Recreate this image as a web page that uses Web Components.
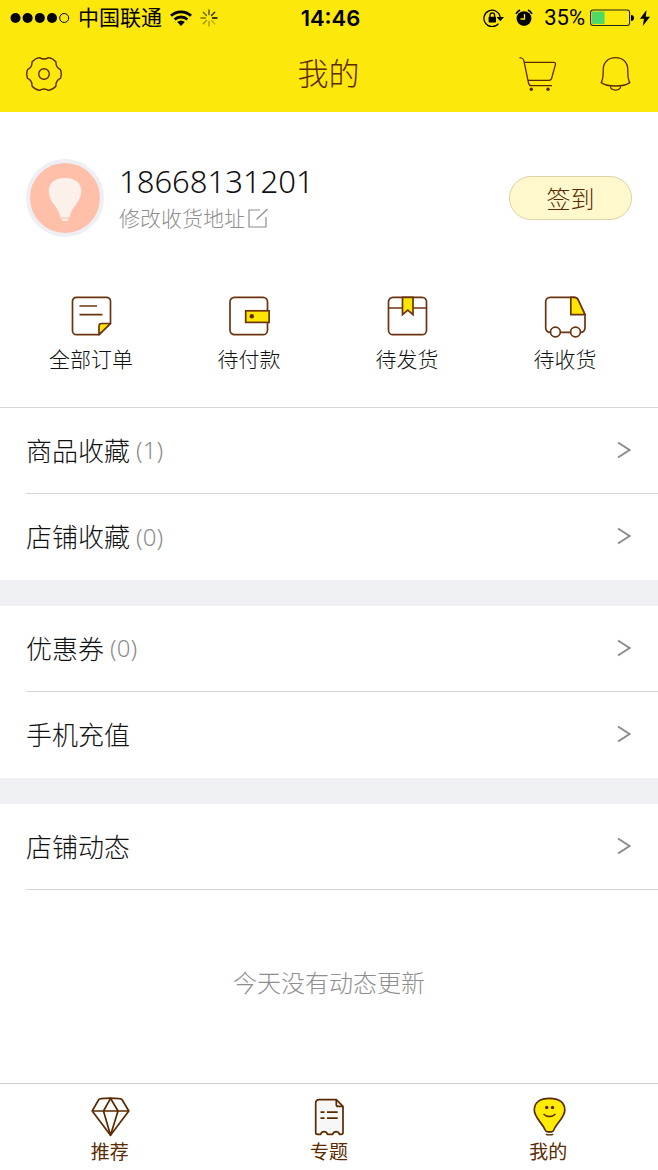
<!DOCTYPE html>
<html lang="zh-CN">
<head>
<meta charset="utf-8">
<meta name="viewport" content="width=device-width, initial-scale=1">
<title>我的</title>
<style>
  html, body { margin: 0; }
  body {
    --brand: #fde80c;
    --brown: #5a2a00;
    --line: #d6d6d8;
    --gap: #eff0f4;
    --muted: #8e8e8e;
    font-family: "Noto Sans", "Noto Sans CJK SC", sans-serif;
    font-weight: 300;
    color: #111;
    background: #fff;
  }
</style>
</head>
<body>
<account-page></account-page>

<script>
const ICONS = {
  signal: [60, 12, '<g fill="#000"><circle cx="5.5" cy="6" r="5"/><circle cx="17.6" cy="6" r="5"/><circle cx="29.8" cy="6" r="5"/><circle cx="42" cy="6" r="5"/></g><circle cx="54.2" cy="6" r="4.5" fill="none" stroke="#000"/>'],
  wifi: [22, 16, '<g fill="none" stroke="#000" stroke-width="2.8"><path d="M1 5.8a14.5 14.5 0 0 1 20 0"/><path d="M4.6 9.6a9.2 9.2 0 0 1 12.8 0"/></g><path d="M7.2 12a5.4 5.4 0 0 1 7.6 0L11 16z" fill="#000"/>'],
  spinner: [18, 18, '<g stroke="#000" stroke-width="1.3" stroke-linecap="round"><path d="M9 1v4.5" opacity=".7"/><path d="M14.7 3.3l-3.2 3.2" opacity=".85"/><path d="M12.5 9H17"/><path d="M14.7 14.7l-3.2-3.2" opacity=".25"/><path d="M9 12.5V17" opacity=".35"/><path d="M3.3 14.7l3.2-3.2" opacity=".4"/><path d="M1 9h4.5" opacity=".5"/><path d="M3.3 3.3l3.2 3.2" opacity=".6"/></g>'],
  lock: [21, 18, '<path d="M15.5 14.6A8.2 8.2 0 1 1 17.2 8" fill="none" stroke="#000" stroke-width="1.3"/><path d="M13.6 8H21l-3.7 4.2z" fill="#000"/><rect x="5.6" y="7.8" width="7.4" height="5.6" rx=".7" fill="#000"/><path d="M7 8V6.2a2.3 2.3 0 0 1 4.6 0V8" fill="none" stroke="#000" stroke-width="1.3"/>'],
  alarm: [18, 18, '<circle cx="9" cy="9.6" r="7.4" fill="#000"/><path d="M1 5a9 9 0 0 1 4-4M17 5a9 9 0 0 0-4-4" fill="none" stroke="#000" stroke-width="1.6"/><path d="M9.5 5v5H5.5" fill="none" stroke="#fde80c" stroke-width="1.3"/>'],
  battery: [44, 18, '<rect x=".6" y="1" width="39" height="15.5" rx="2.5" fill="none" stroke="#222" stroke-width="1.1"/><rect x="2" y="2.6" width="12.5" height="12.3" fill="#4cd964"/><path d="M41 6a3 3 0 0 1 0 6z" fill="#000"/>'],
  bolt: [12, 16, '<path d="M7.5 0L1 8.8h4L3.8 16 11 6.8H6.8z" fill="#000"/>'],
  gear: [36, 36, '<g fill="none" stroke="#5a2a00" stroke-width="1.4" stroke-linejoin="round"><path d="M22.4 1.6A12 12 0 0 1 30 6Q29.6 11.3 34.4 13.6A12 12 0 0 1 34.4 22.4Q29.6 24.7 30 30A12 12 0 0 1 22.4 34.4Q18 31.5 13.6 34.4A12 12 0 0 1 6 30Q6.4 24.7 1.6 22.4A12 12 0 0 1 1.6 13.6Q6.4 11.3 6 6A12 12 0 0 1 13.6 1.6Q18 4.5 22.4 1.6z"/><circle cx="18" cy="18" r="5.3"/></g>'],
  cart: [38, 36, '<g fill="none" stroke="#5a2a00" stroke-width="1.3" stroke-linejoin="round"><path d="M.5 1.6C3.6 1.8 4.7 2.6 5.2 6.2L9.4 26.5Q10 29.6 12 29.6H33"/><path d="M5.2 6.3H34.5Q36.9 6.3 36.4 8.6L32.6 22.5Q32 24.4 30 24.4H9"/></g><circle cx="12.3" cy="33.3" r="1.7" fill="#5a2a00"/><circle cx="29" cy="33.3" r="1.7" fill="#5a2a00"/>'],
  bell: [32, 36, '<g fill="none" stroke="#5a2a00" stroke-width="1.3" stroke-linejoin="round"><path d="M2.2 26.6C4.4 23 4.2 19.5 4.2 14 4.2 6.5 9 1.6 16.5 1.6S28.8 6.5 28.8 14c0 5.500-.2 9 2 12.600C28 28.6 22.5 30 16.5 30S5 28.6 2.2 26.6z"/><path d="M11.3 30.3c.5 5 9.9 5 10.4 0"/></g>'],
  avatar: [78, 78, '<circle cx="39" cy="39" r="37" fill="#ffbfa9" stroke="#eeeff4" stroke-width="4"/><path d="M39 19c-9.5 0-16.3 4.5-16.3 13.2C22.7 43 32.5 47 34.4 58.5h9.2C45.5 47 55.3 43 55.3 32.2 55.3 23.5 48.5 19 39 19z" fill="#fbf1ea"/><path d="M35.5 59.5h7l-.8 2.400h-5.400z" fill="#fbf1ea"/>'],
  edit: [22, 22, '<path d="M13 3H2v17h17V10M9.5 12.5L20.5 2" fill="none" stroke="#8e8e8e" stroke-width="1.2"/>'],
  order: [44, 44, '<g fill="none" stroke="#6b3410" stroke-width="1.7" stroke-linejoin="round"><path d="M30 40.7H7.5a4 4 0 0 1-4-4V7.3a4 4 0 0 1 4-4h30a4 4 0 0 1 4 4V29.5z"/><path d="M30 40.7V32a2.5 2.5 0 0 1 2.5-2.5h9z" fill="#ffe600"/><path d="M10.5 12H28M10.5 20.6H33.5"/></g>'],
  wallet: [44, 44, '<g fill="none" stroke="#6b3410" stroke-width="1.7"><rect x="3" y="3.3" width="37.5" height="37.4" rx="4.5"/><rect x="18.7" y="16.8" width="23.4" height="11.6" fill="#ffe600"/></g><circle cx="24.8" cy="22.3" r="2.2" fill="#5a2a00"/>'],
  box: [44, 44, '<g fill="none" stroke="#6b3410" stroke-width="1.7"><rect x="3.5" y="3.3" width="38" height="37.4" rx="4.5"/><path d="M3.5 14H41.5"/><path d="M17.5 3.3H28V20.6L22.8 16.2 17.5 20.6z" fill="#ffe600"/></g>'],
  truck: [44, 44, '<g fill="none" stroke="#6b3410" stroke-width="1.7" stroke-linejoin="round"><path d="M12 38.3H7a4.3 4.3 0 0 1-4.3-4.3V7.6A4.3 4.3 0 0 1 7 3.3H31Q34 3.3 35.2 6L42 20.7V34a4.3 4.3 0 0 1-4.3 4.3z"/><path d="M27.8 3.3H31Q34 3.3 35.2 6L42 20.7H27.8z" fill="#ffe600"/><circle cx="12.4" cy="38" r="4.9" fill="#fff"/><circle cx="32.5" cy="38" r="4.9" fill="#fff"/></g>'],
  chevron: [14, 18, '<path d="M1 1.5L12.5 9 1 16.5" fill="none" stroke="#8c8c8c" stroke-width="2"/>'],
  diamond: [40, 40, '<g fill="none" stroke="#5a2a00" stroke-width="1.7" stroke-linejoin="round"><path d="M8.5 3Q9.3 1.7 11 1.6 20 .8 29.5 1.6 31.5 1.7 32.3 3L38.8 14 20.5 38.3 2.2 14z"/><path d="M2.2 14H38.8M20.5 1.3L13.5 14 20.5 38.3 28 14z"/></g>'],
  topic: [40, 40, '<path d="M10 2.7H27.3L34 9.4V35.5Q34 37.3 32 37.3H30.6C29 33.8 25.2 33.8 23.6 37.3H18.6C17 33.8 13.2 33.8 11.6 37.3H8.5Q6.7 37.3 6.7 35.5V6Q6.7 2.7 10 2.7z" fill="#f7f7f7" stroke="#5a2a00" stroke-width="1.7" stroke-linejoin="round"/><path d="M27.3 2.7V7.4Q27.3 9.4 29.3 9.4H34M11.5 15.2H15.5M18 15.2H28.7M11.5 21.2H15.5M18 21.2H28.7" fill="none" stroke="#5a2a00" stroke-width="1.7"/>'],
  bulb: [40, 40, '<g stroke="#5a2a00" stroke-width="1.7" stroke-linejoin="round" fill="none"><path d="M21.5 1.3C12 1.3 6.3 5.5 6.3 13 6.3 20.5 14 25.5 17.2 33 17.7 34.3 18.4 34.8 19.6 34.8H23.4C24.6 34.8 25.3 34.3 25.8 33 29 25.5 36.8 20.5 36.8 13 36.8 5.5 31 1.3 21.5 1.3z" fill="#ffec00"/><path d="M15.5 17c3 3.3 9 3.3 12 0M17.8 37.4q3.7 1 7.5 0" stroke-width="1.4"/></g><circle cx="18.7" cy="10.5" r="1.7" fill="#5a2a00"/><circle cx="24.5" cy="10.5" r="1.7" fill="#5a2a00"/>']
};

const define = (name, markup, init) => {
  const template = document.createElement('template');
  template.innerHTML = markup;
  customElements.define(name, class extends HTMLElement {
    constructor() {
      super();
      this.attachShadow({ mode: 'open' }).append(template.content.cloneNode(true));
    }
    connectedCallback() { if (init) init(this, this.shadowRoot); }
  });
};

define('app-icon', `<style>:host{display:block;flex:none} svg{display:block}</style><svg aria-hidden="true"></svg>`, (el, root) => {
  const [w, h, body] = ICONS[el.getAttribute('name')];
  const svg = root.querySelector('svg');
  svg.setAttribute('width', w);
  svg.setAttribute('height', h);
  svg.setAttribute('viewBox', `0 0 ${w} ${h}`);
  svg.innerHTML = body;
});

define('status-bar', `
<style>
  :host { display: grid; grid-template-columns: 1fr auto 1fr; align-items: center; height: 36px; padding: 0 7px 0 10px; background: var(--brand); color: #000; font: 400 21px/36px "Inter", "Noto Sans CJK SC", sans-serif; }
  div { display: flex; align-items: center; }
  .left { gap: 8px; }
  .right { justify-content: flex-end; gap: 5px; }
  .lock, .alarm { margin-right: 6px; }
  .charge { font-family: Roboto, sans-serif; font-size: 22px; }
  time { font-weight: 600; font-size: 22px; }
</style>
<div class="left"><app-icon name="signal"></app-icon><span>中国联通</span><app-icon name="wifi"></app-icon><app-icon name="spinner"></app-icon></div>
<time>14:46</time>
<div class="right"><app-icon class="lock" name="lock"></app-icon><app-icon class="alarm" name="alarm"></app-icon><span class="charge">35%</span><app-icon name="battery"></app-icon><app-icon name="bolt"></app-icon></div>`);

define('nav-bar', `
<style>
  :host { display: grid; grid-template-columns: 1fr auto 1fr; align-items: center; height: 76px; padding: 0 27px 0 26px; background: var(--brand); color: var(--brown); }
  h1 { margin: 0; padding-bottom: 3px; font-size: 31px; font-weight: 300; line-height: 40px; }
  button { border: 0; padding: 0; background: none; }
  div { display: flex; }
  .end { justify-content: flex-end; gap: 42px; }
</style>
<div><button aria-label="设置"><app-icon name="gear"></app-icon></button></div>
<h1><slot></slot></h1>
<div class="end"><button aria-label="购物车"><app-icon name="cart"></app-icon></button><button aria-label="消息"><app-icon name="bell"></app-icon></button></div>`);

define('user-profile', `
<style>
  :host { display: flex; align-items: center; gap: 15px; padding: 47px 26px 0; }
  .who { flex: 1; padding-top: 2px; }
  .phone { font-size: 31px; line-height: 38px; }
  a { display: flex; align-items: center; gap: 2px; font-size: 21px; line-height: 36px; color: var(--muted); text-decoration: none; }
  button { width: 123px; height: 44px; padding: 0 0 2px; border: 1px solid #ddd2a6; border-radius: 22px; background: #fff8cc; color: var(--brown); font: inherit; font-size: 24px; }
</style>
<app-icon name="avatar"></app-icon>
<div class="who"><div class="phone"><slot></slot></div><a href="#address"><span>修改收货地址</span><app-icon name="edit"></app-icon></a></div>
<button>签到</button>`);

define('icon-link', `
<style>
  :host { display: block; flex: 1; }
  a { display: flex; flex-direction: column; align-items: center; gap: var(--icon-gap); color: inherit; text-decoration: none; font-size: var(--label-size); line-height: var(--label-line); }
</style>
<a><span><slot></slot></span></a>`, (el, root) => {
  const link = root.querySelector('a');
  const icon = document.createElement('app-icon');
  icon.setAttribute('name', el.getAttribute('icon'));
  link.href = '#' + el.getAttribute('icon');
  link.prepend(icon);
});

define('order-links', `
<style>
  :host { --icon-gap: 7px; --label-size: 21px; --label-line: 28px; display: flex; padding: 57px 14px 34px 12px; }
</style>
<slot></slot>`);

define('list-group', `
<style>
  :host { display: block; border-bottom: 26px solid var(--gap); }
  :host([first]) { border-top: 1px solid var(--line); }
  :host([last]) { border-bottom: 0; }
</style>
<slot></slot>`);

define('list-row', `
<style>
  :host { display: block; padding-left: 26px; }
  a { box-sizing: border-box; display: flex; align-items: center; height: 86px; padding: 0 27px 2px 0; color: inherit; text-decoration: none; font-size: 26px; }
  :host([divided]) a { border-bottom: 1px solid var(--line); }
  .label { flex: 1; display: flex; align-items: center; gap: 6px; }
  ::slotted([slot=count]) { font-size: 24px; color: var(--muted); }
</style>
<a href="#list"><span class="label"><span><slot></slot></span><slot name="count"></slot></span><app-icon name="chevron"></app-icon></a>`);

define('tab-bar', `
<style>
  :host { --icon-gap: 3px; --label-size: 19px; --label-line: 24px; display: flex; padding: 13px 0 6px; border-top: 1px solid #ccc; color: var(--brown); font-weight: 400; }
</style>
<slot></slot>`);

define('account-page', `
<style>
  :host { display: flex; flex-direction: column; min-height: 100vh; }
  main { flex: 1; display: flex; flex-direction: column; }
  .empty { flex: 1; display: flex; align-items: center; justify-content: center; margin: 0; padding-bottom: 8px; font-size: 24px; line-height: 36px; color: var(--muted); }
</style>
<header><status-bar></status-bar><nav-bar>我的</nav-bar></header>
<main>
  <user-profile>18668131201</user-profile>
  <order-links>
    <icon-link icon="order">全部订单</icon-link>
    <icon-link icon="wallet">待付款</icon-link>
    <icon-link icon="box">待发货</icon-link>
    <icon-link icon="truck">待收货</icon-link>
  </order-links>
  <list-group first>
    <list-row divided>商品收藏<span slot="count">(1)</span></list-row>
    <list-row>店铺收藏<span slot="count">(0)</span></list-row>
  </list-group>
  <list-group>
    <list-row divided>优惠券<span slot="count">(0)</span></list-row>
    <list-row>手机充值</list-row>
  </list-group>
  <list-group last>
    <list-row divided>店铺动态</list-row>
  </list-group>
  <p class="empty">今天没有动态更新</p>
</main>
<tab-bar>
  <icon-link icon="diamond">推荐</icon-link>
  <icon-link icon="topic">专题</icon-link>
  <icon-link icon="bulb">我的</icon-link>
</tab-bar>`);
</script>
</body>
</html>
